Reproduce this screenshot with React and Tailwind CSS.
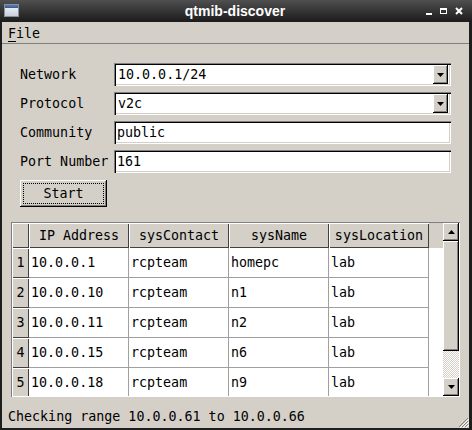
import React from "react";

const rows = [
  { n: 1, ip: "10.0.0.1", contact: "rcpteam", name: "homepc", loc: "lab" },
  { n: 2, ip: "10.0.0.10", contact: "rcpteam", name: "n1", loc: "lab" },
  { n: 3, ip: "10.0.0.11", contact: "rcpteam", name: "n2", loc: "lab" },
  { n: 4, ip: "10.0.0.15", contact: "rcpteam", name: "n6", loc: "lab" },
  { n: 5, ip: "10.0.0.18", contact: "rcpteam", name: "n9", loc: "lab" },
];

const sunken =
  "bg-white shadow-[inset_1px_1px_0_#808080,inset_2px_2px_0_#000,inset_-1px_-1px_0_#fff,inset_-2px_-2px_0_#d4d0c8]";
const raised =
  "bg-[#d4d0c8] shadow-[inset_-1px_-1px_0_#000,inset_1px_1px_0_#fff,inset_-2px_-2px_0_#808080]";

function Arrow({ up }) {
  return (
    <svg width="7" height="4" viewBox="0 0 7 4">
      {up ? <path d="M3.5 0L7 4H0z" fill="#000" /> : <path d="M0 0h7L3.5 4z" fill="#000" />}
    </svg>
  );
}

function Combo({ value }) {
  return (
    <div className={`relative h-[23px] flex-1 ${sunken}`}>
      <span className="absolute left-[4px] top-[3px] leading-[17px]">{value}</span>
      <div className={`absolute right-[3px] top-[2px] flex h-[19px] w-[15px] items-center justify-center ${raised}`}>
        <Arrow />
      </div>
    </div>
  );
}

function Field({ value }) {
  return (
    <div className={`relative h-[23px] flex-1 ${sunken}`}>
      <span className="absolute left-[3px] top-[3px] leading-[17px]">{value}</span>
    </div>
  );
}

function Row({ label, children }) {
  return (
    <div className="flex items-center">
      <div className="w-[94px]">{label}</div>
      {children}
    </div>
  );
}

export default function App() {
  return (
    <div
      className="relative flex h-[430px] w-[472px] flex-col overflow-hidden bg-[#1e1e1e] text-[13.33px] text-black"
      style={{ fontFamily: '"DejaVu Sans Mono", monospace' }}
    >
      {/* Title bar */}
      <div className="relative flex h-[22px] items-center justify-center bg-gradient-to-b from-[#505050] to-[#1c1c1c]">
        <div className="absolute left-[4px] top-[4px] h-[13px] w-[15px] border border-[#8890a0] bg-gradient-to-b from-[#f4f6fa] to-[#c8d0dc]">
          <div className="h-[3px] bg-gradient-to-b from-[#5b7fb5] to-[#36588f]" />
        </div>
        <span
          className="pr-[2px] text-[14px] font-bold text-white"
          style={{ fontFamily: '"Liberation Sans", Arial, sans-serif' }}
        >
          qtmib-discover
        </span>
        <div className="absolute right-[9px] top-[7px] flex items-center gap-[8px]">
          <div className="mt-[6px] h-[2px] w-[6px] bg-white" />
          <div className="h-[6px] w-[7px] border border-t-2 border-white" />
          <svg width="8" height="8" viewBox="0 0 8 8">
            <path d="M1 1L7 7M7 1L1 7" stroke="#fff" strokeWidth="2" />
          </svg>
        </div>
      </div>

      {/* Window body */}
      <div className="mb-[2px] ml-[2px] mr-[3px] flex flex-1 flex-col bg-[#d4d0c8]">
        {/* Menu */}
        <div className="h-[22px] border-b border-[#808080] pl-[6px] pt-[3px] leading-[18px]">
          <span className="underline decoration-1 underline-offset-[3px]">F</span>ile
        </div>

        {/* Form */}
        <div className="flex flex-col gap-[6px] pl-[18px] pr-[18px] pt-[19px]">
          <Row label="Network">
            <Combo value="10.0.0.1/24" />
          </Row>
          <Row label="Protocol">
            <Combo value="v2c" />
          </Row>
          <Row label="Community">
            <Field value="public" />
          </Row>
          <Row label="Port Number">
            <Field value="161" />
          </Row>
          <div className="pt-[1px]">
            <div className={`flex h-[27px] w-[87px] items-center justify-center p-[3px] ${raised}`}>
              <div className="flex h-full w-full items-center justify-center border border-dotted border-black">
                Start
              </div>
            </div>
          </div>
        </div>

        {/* Table */}
        <div className="ml-[9px] mr-[9px] mt-[15px] flex h-[175px] bg-white p-[1px] shadow-[inset_1px_1px_0_#808080,inset_-1px_-1px_0_#fff]">
          <div className="flex flex-1 flex-col overflow-hidden bg-white">
            <div className="flex h-[25px] shrink-0 bg-[#d4d0c8]">
              <div className="w-[17px] shadow-[inset_1px_1px_0_#fff,inset_-1px_-1px_0_#404040]" />
              {["IP Address", "sysContact", "sysName", "sysLocation"].map((h) => (
                <div
                  key={h}
                  className="flex w-[100px] items-center justify-center shadow-[inset_1px_1px_0_#fff,inset_-1px_-1px_0_#404040]"
                >
                  {h}
                </div>
              ))}
            </div>
            {rows.map((r) => (
              <div key={r.n} className="flex h-[30px] shrink-0">
                <div className="flex w-[17px] items-center justify-center bg-[#d4d0c8] shadow-[inset_1px_1px_0_#fff,inset_-1px_-1px_0_#404040]">
                  {r.n}
                </div>
                {[r.ip, r.contact, r.name, r.loc].map((v, i) => (
                  <div
                    key={i}
                    className="flex w-[100px] items-center border-b border-r border-[#a0a0a0] pl-[2px]"
                  >
                    {v}
                  </div>
                ))}
              </div>
            ))}
          </div>
          {/* Scrollbar */}
          <div className="flex w-[16px] flex-col bg-[#d4d0c8]">
            <div className={`flex h-[18px] items-center justify-center ${raised}`}>
              <Arrow up />
            </div>
            <div className={`h-[110px] ${raised}`} />
            <div className="flex-1 bg-[repeating-conic-gradient(#d4d0c8_0_25%,#fff_0_50%)] bg-[length:2px_2px]" />
            <div className={`flex h-[18px] items-center justify-center ${raised}`}>
              <Arrow />
            </div>
          </div>
        </div>

        {/* Status bar */}
        <div className="relative flex flex-1 items-end pb-[1px] pl-[6px]">
          Checking range 10.0.0.61 to 10.0.0.66
          <svg className="absolute bottom-0 right-0" width="12" height="12" viewBox="0 0 12 12">
            <path d="M11 2L2 11M11 5L5 11M11 8L8 11" stroke="#808080" strokeWidth="1" />
            <path d="M12 3L3 12M12 6L6 12M12 9L9 12" stroke="#fff" strokeWidth="1" />
          </svg>
        </div>
      </div>
    </div>
  );
}
